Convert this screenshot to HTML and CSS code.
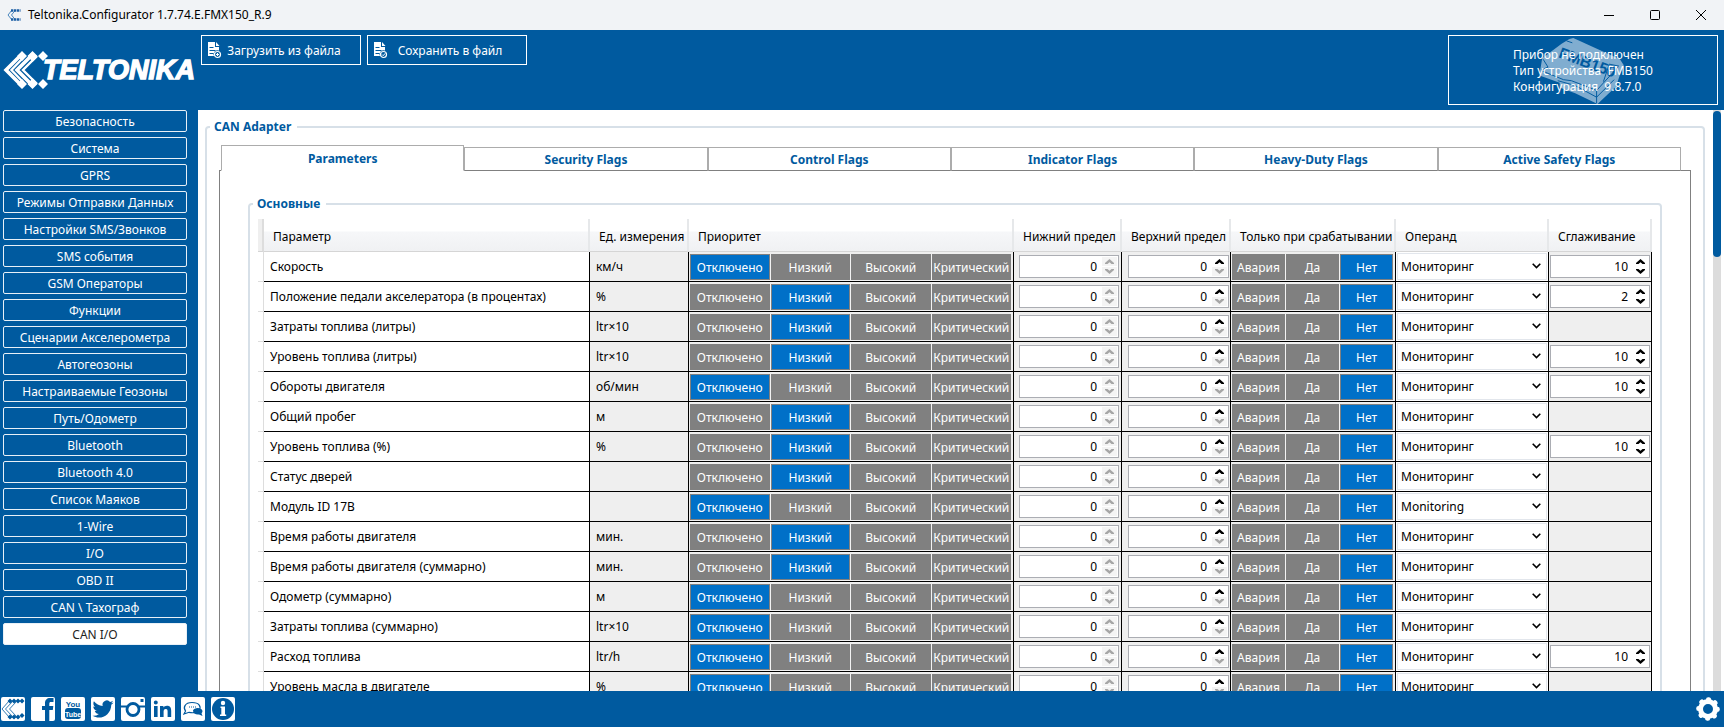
FILE: index.html
```html
<!DOCTYPE html>
<html lang="ru">
<head>
<meta charset="utf-8">
<title>Teltonika.Configurator 1.7.74.E.FMX150_R.9</title>
<link rel="stylesheet" href="styles.css">
</head>
<body>
<svg class="defs" aria-hidden="true">
  <defs>
    <symbol id="mark" viewBox="0 0 46 38">
      <path fill="currentColor" d="M19 0l5 5-5 5-5-5zM29.500 0l5 5-5 5-5-5zM40 0l5 5-5 5-5-5zM19 28l5 5-5 5-5-5zM29.500 28l5 5-5 5-5-5zM40 28l5 5-5 5-5-5z"/>
      <path fill="none" stroke="currentColor" stroke-width="3.600" d="M18 4L3 19l15 15M29 4L23.500 9.500 14 19l9.500 9.500L29 34"/>
      <path fill="none" stroke="currentColor" stroke-width="2.400" d="M20 7L8.500 19 20 31M34 5l-3 3-11 11 11 11 3 3"/>
      <path fill="currentColor" d="M25 5l4.500-4 5 5-5 5zM25 33l4.500 4 5-5-5-5z"/>
    </symbol>
    <symbol id="up" viewBox="0 0 9 5"><path fill="currentColor" d="M4.500 0L9 4v1H6.500L4.500 3.200 2.500 5H0V4z"/></symbol>
    <symbol id="down" viewBox="0 0 9 5"><path fill="currentColor" d="M4.500 5L9 1V0H6.500L4.500 1.800 2.500 0H0v1z"/></symbol>
    <symbol id="file" viewBox="0 0 15 17">
      <path fill="#fff" d="M1 0h7v5h4v3.500A4 4 0 0 0 7 14H1zM9 0l3.500 4H9z"/>
      <path stroke="#005a9f" d="M2.500 5.500h4M2.500 8.500h6M2.500 11.500h4"/>
      <circle cx="10.500" cy="12.500" r="3" fill="#005a9f" stroke="#fff" stroke-width="1.200"/>
    </symbol>
  </defs>
</svg>

<header class="titlebar">
  <svg class="titlebar__icon" viewBox="0 0 14 12"><g fill="none" stroke="#4a86bd"><path d="M5 1L1 6l4 5M8.500 1L4.500 6l4 5"/><path stroke="#1c5fa5" stroke-width="2.400" stroke-dasharray="2.400 .6" d="M4 1.500h9.500M4 10.500h9.500"/></g></svg>
  <h1 class="titlebar__title">Teltonika.Configurator 1.7.74.E.FMX150_R.9</h1>
  <div class="titlebar__controls">
    <button class="winbtn" aria-label="Свернуть"><svg viewBox="0 0 12 12"><path d="M1 6.500h10"/></svg></button>
    <button class="winbtn" aria-label="Развернуть"><svg viewBox="0 0 12 12"><rect x="1.500" y="1.500" width="9" height="9" rx="1"/></svg></button>
    <button class="winbtn" aria-label="Закрыть"><svg viewBox="0 0 12 12"><path d="M1 1l10 10M11 1L1 11"/></svg></button>
  </div>
</header>

<div class="topbar">
  <svg class="logo" viewBox="0 0 192 38" role="img" aria-label="Teltonika">
    <use href="#mark" width="46" height="38"/>
    <text class="logo__text" x="40" y="28">TELTONIKA</text>
  </svg>
  <div class="toolbar">
    <button class="toolbtn"><svg viewBox="0 0 15 17"><use href="#file"/><path stroke="#fff" d="M9 12.500h3M10.500 11v3"/></svg><span>Загрузить из файла</span></button>
    <button class="toolbtn"><svg viewBox="0 0 15 17"><use href="#file"/><path stroke="#fff" fill="none" d="M9 12.500l1.200 1.200 2-2.400"/></svg><span>Сохранить в файл</span></button>
  </div>
  <div class="device">
    <svg class="device__image" viewBox="0 0 88 70" aria-hidden="true">
      <path fill="#80add0" d="M30 3l4-1 48 22 4 6-4 10-4 12-19 18-23-11-16-6v-5L0 41v-6l2-12 20-15z"/>
      <path fill="none" stroke="#005a9f" d="M2 36l22 9 8 1 26 10 22-24M18 46l18 5 22 12 18-18M58 56v13M3 24l5 8-7 3M65 47l6-18 10 2M27 5l6 2"/>
      <text class="device__label" transform="translate(18 22) rotate(20)">FMB150</text>
    </svg>
    <p class="device__text">Прибор не подключен<br>Тип устройства &nbsp;FMB150<br>Конфигурация &nbsp;9.8.7.0</p>
  </div>
</div>

<div class="workspace">
  <nav class="sidebar" id="sidebar"></nav>
  <main class="content">
    <fieldset class="group">
      <legend class="group__title">CAN Adapter</legend>
      <div class="tabs" role="tablist">
        <button class="tab tab--active" role="tab" aria-selected="true">Parameters</button>
        <button class="tab" role="tab">Security Flags</button>
        <button class="tab" role="tab">Control Flags</button>
        <button class="tab" role="tab">Indicator Flags</button>
        <button class="tab" role="tab">Heavy-Duty Flags</button>
        <button class="tab" role="tab">Active Safety Flags</button>
      </div>
      <div class="panel" role="tabpanel">
        <fieldset class="group group--inner">
          <legend class="group__title">Основные</legend>
          <table class="grid">
            <colgroup>
              <col class="col-mark"><col><col class="col-unit"><col class="col-priority"><col class="col-low"><col class="col-high"><col class="col-event"><col class="col-operand"><col class="col-avg">
            </colgroup>
            <thead>
              <tr><th class="grid__corner"></th><th>Параметр</th><th>Ед. измерения</th><th>Приоритет</th><th>Нижний предел</th><th>Верхний предел</th><th>Только при срабатывании</th><th>Операнд</th><th>Сглаживание</th></tr>
            </thead>
            <tbody id="rows"></tbody>
          </table>
        </fieldset>
      </div>
    </fieldset>
  </main>
  <div class="scrollbar" aria-hidden="true"><div class="scrollbar__thumb"></div></div>
</div>

<footer class="footer">
  <a class="social social--mark" href="#" aria-label="Teltonika"><svg viewBox="0 0 24 24"><path fill="none" stroke="#005a9f" stroke-width=".8" d="M8 4L1 12l7 8M11 5l-6.500 7 6.500 7M15 5l-6.500 7 6.500 7"/><path fill="#005a9f" d="M9 1.500l2.500 2.500L9 6.500 6.500 4zM13 1.500l2.500 2.500L13 6.500 10.500 4zM17 1.500l2.500 2.500L17 6.500 14.500 4zM21 1.500l2.500 2.500L21 6.500 18.500 4zM9 17.500l2.500 2.500L9 22.500 6.500 20zM13 17.500l2.500 2.500-2.500 2.500-2.500-2.500zM17 17.500l2.500 2.500-2.500 2.500-2.500-2.500zM21 16l2.500 2.500L21 21l-2.500-2.500z"/></svg></a>
  <a class="social" href="#" aria-label="Facebook"><svg viewBox="0 0 24 24"><path fill="#005a9f" d="M14 24V13h-3V9h3V6c0-3 2-5 5-5h3.500v4H20c-1.300 0-1.700.6-1.700 1.800V9h4l-.5 4h-3.500v11z"/></svg></a>
  <a class="social" href="#" aria-label="YouTube"><svg viewBox="0 0 24 24"><text class="social__you" x="12" y="10" text-anchor="middle">You</text><rect x="4" y="11" width="16" height="11" rx="3" fill="#005a9f"/><text class="social__tube" x="12" y="20" text-anchor="middle">Tube</text></svg></a>
  <a class="social" href="#" aria-label="Twitter"><svg viewBox="0 0 24 24"><path fill="#005a9f" d="M22.500 5.500c-.8.400-1.600.6-2.500.7.900-.5 1.600-1.400 1.900-2.400-.8.500-1.800.9-2.800 1.100a4.300 4.300 0 0 0-7.400 4C8.100 8.700 5 7 2.900 4.300c-1.100 2-.5 4.500 1.400 5.800-.7 0-1.400-.2-2-.5 0 2.100 1.500 3.900 3.500 4.300-.6.200-1.300.2-2 .1.600 1.700 2.200 3 4.100 3A8.800 8.800 0 0 1 1.500 18.800C9.500 23.500 20 18.500 20.300 7.700c.9-.6 1.600-1.400 2.200-2.200z"/></svg></a>
  <a class="social" href="#" aria-label="Instagram"><svg viewBox="0 0 24 24"><path fill="none" stroke="#005a9f" stroke-width="2.200" d="M0 9.500h6M18 9.500h6"/><circle cx="12" cy="12.500" r="6" fill="none" stroke="#005a9f" stroke-width="2.800"/><path fill="#005a9f" d="M19.500 2h3v3h-3z"/></svg></a>
  <a class="social" href="#" aria-label="LinkedIn"><svg viewBox="0 0 24 24"><path fill="#005a9f" d="M3 9h3.600v11H3zM4.800 3.500a2 2 0 1 1 0 4 2 2 0 0 1 0-4zM9 9h3.400v1.500c.7-1.100 1.900-1.800 3.500-1.800 3.500 0 4.300 2.200 4.300 5.300v6h-3.600v-5.400c0-1.400-.1-2.700-1.800-2.700-1.700 0-2.200 1.200-2.200 2.700V20H9z"/></svg></a>
  <a class="social" href="#" aria-label="Форум"><svg viewBox="0 0 24 24"><path fill="#fff" stroke="#005a9f" stroke-width="1.200" d="M3 17l1.500-3C2 11 3.500 5.500 11 5.500s9.500 4.500 7 7.500-7 3-10 2.300z"/><path fill="#005a9f" d="M12 13.500c1-3.500 9-3.500 9.500.5 0 1-.4 1.700-1 2.300L21.500 19l-3.500-1.500c-3 .5-6-1-6-4z"/><path stroke="#005a9f" stroke-dasharray="1 1" d="M8 10h8"/></svg></a>
  <a class="social" href="#" aria-label="Информация"><svg viewBox="0 0 24 24"><circle cx="12" cy="12" r="11" fill="#005a9f"/><circle cx="12" cy="6" r="2.200" fill="#fff"/><path fill="#fff" d="M9.500 9.500H14v8h1.200v1.500H9v-1.500h1.300V11h-.8z"/></svg></a>
  <button class="settings" aria-label="Настройки"><svg viewBox="0 0 24 24"><circle cx="12" cy="12" r="7.500" fill="none" stroke="#fff" stroke-width="5"/><circle cx="12" cy="12" r="9.500" fill="none" stroke="#fff" stroke-width="4.600" stroke-linecap="round" stroke-dasharray=".6 6.861"/></svg></button>
</footer>
<script src="app.js"></script>
</body>
</html>
```
FILE: styles.css
```css
:root {
  --blue: #005a9f;
  --accent: #0070c8;
  --line: #d7e0e8;
  --cell: #efefef;
}

* { box-sizing: border-box; }

html, body { height: 100%; }

body {
  margin: 0;
  display: flex;
  flex-direction: column;
  overflow: hidden;
  background: #fff;
  color: #000;
  font: 12px/16px "Noto Sans", "Open Sans", sans-serif;
}

button, input, select { font: inherit; color: inherit; margin: 0; }

.defs { position: absolute; width: 0; height: 0; }

/* Window frame */
.titlebar {
  flex: none;
  display: flex;
  align-items: center;
  height: 30px;
  padding-left: 7px;
  background: #f1f3f6;
}
.titlebar__icon { width: 14px; height: 12px; }
.titlebar__title { flex: 1; margin: 0 0 0 7px; font-size: 12px; font-weight: 400; }
.titlebar__controls { display: flex; }
.winbtn {
  width: 46px;
  height: 30px;
  padding: 0;
  border: 0;
  background: none;
}
.winbtn svg { display: block; width: 12px; height: 12px; margin: auto; fill: none; stroke: #000; }

/* Top bar */
.topbar {
  flex: none;
  display: flex;
  align-items: flex-start;
  height: 80px;
  padding: 5px 6px 0 3px;
  background: var(--blue);
  color: #fff;
}
.logo { flex: none; width: 192px; height: 38px; margin: 16px 6px 0 0; color: #fff; }
.logo__text {
  fill: #fff;
  stroke: #fff;
  stroke-width: 1.4;
  font: italic bold 27px "Liberation Sans", Arial, sans-serif;
}
.toolbar { flex: 1; display: flex; gap: 6px; }
.toolbtn {
  display: flex;
  align-items: center;
  width: 160px;
  height: 30px;
  padding: 1px 14px 0 5px;
  border: 1px solid #fff;
  background: none;
}
.toolbtn svg { width: 15px; height: 17px; }
.toolbtn span { flex: 1; text-align: center; white-space: nowrap; }
.device {
  display: grid;
  place-items: center;
  width: 270px;
  height: 70px;
  border: 1px solid #fff;
}
.device > * { grid-area: 1 / 1; }
.device__image { width: 88px; height: 68px; }
.device__label { fill: var(--blue); font: bold 16px "Liberation Sans", Arial, sans-serif; }
.device__text { z-index: 1; margin: 0; padding-top: 2px; }

/* Sidebar */
.workspace { flex: 1; display: flex; min-height: 0; }
.sidebar {
  flex: none;
  display: flex;
  flex-direction: column;
  gap: 5px;
  width: 198px;
  padding: 0 11px 0 3px;
  background: var(--blue);
}
.sidebar__item {
  flex: none;
  height: 22px;
  padding: 1px 0 0;
  border: 1px solid #e8f0f7;
  border-radius: 2px;
  background: none;
  color: #fff;
}
.sidebar__item--active { background: #fff; color: #222; }

/* Content */
.content { flex: 1; min-width: 0; overflow: hidden; padding: 9px 8px 0 7px; }
.group {
  min-width: 0;
  margin: 0;
  padding: 10px 12px 12px;
  border: 2px solid var(--line);
  border-radius: 4px;
}
.group__title {
  margin-left: -9px;
  padding: 0 6px 0 4px;
  color: var(--blue);
  font-weight: 700;
}
.group--inner { padding: 7px 8px; }
.group--inner > .group__title { margin-left: -5px; }
.tabs { display: flex; align-items: flex-end; margin: 0 10px -1px 2px; }
.tab {
  position: relative;
  flex: 1;
  height: 24px;
  padding: 1px 0 0;
  border: 1px solid #acacac;
  border-bottom-color: #808080;
  background: #fff;
  color: var(--blue);
  font-weight: 700;
}
.tab--active { height: 26px; border-bottom-color: #fff; }
.panel { border: 1px solid #808080; padding: 25px 28px 24px; }

.grid { width: 100%; table-layout: fixed; border-collapse: separate; border-spacing: 0; }
.col-mark { width: 6px; }
.col-unit { width: 99px; }
.col-priority { width: 325px; }
.col-low { width: 108px; }
.col-high { width: 109px; }
.col-event { width: 165px; }
.col-operand { width: 153px; }
.col-avg { width: 103px; }
.grid th {
  height: 33px;
  padding: 3px 0 0 9px;
  border-right: 2px solid #e6e8ea;
  border-bottom: 1px solid #d5d5d5;
  background: linear-gradient(#fff 38%, #f6f7f9 40%, #f0f1f3);
  font-weight: 400;
  text-align: left;
  white-space: nowrap;
}
.grid .grid__corner { padding: 0; border-right-color: #ddd; background: #efefef; }
.grid td {
  height: 30px;
  padding: 0 2px 0 1px;
  border-right: 1px solid #000;
  border-bottom: 1px solid #000;
  background: var(--cell);
}
.grid .cell-mark { padding: 0; border-color: #ddd; background: #fff; }
.grid .cell-name { padding-left: 6px; background: #fff; }
.grid .cell-unit { padding-left: 6px; }
.grid .cell-low { padding: 0 2px 0 5px; }
.grid .cell-high { padding: 0 1px 0 6px; }
.grid .cell-operand { background: #fff; padding: 0 1px; }
.grid .cell-avg { padding: 0 1px; }

.segments { display: grid; grid-auto-flow: column; grid-auto-columns: 1fr; gap: 1px; background: #f2f2f2; }
.segment { position: relative; display: block; height: 26px; }
.segment input { position: absolute; inset: 0; opacity: 0; }
.segment span {
  display: block;
  height: 26px;
  border: 1px solid #808080;
  background: #808080;
  color: #fff;
  line-height: 26px;
  text-align: center;
}
.segment input:checked + span { background: var(--accent); }

.spin {
  display: flex;
  align-items: center;
  height: 23px;
  padding-right: 1px;
  border: 1px solid #abadb3;
  background: #fff;
}
.spin input {
  flex: 1;
  min-width: 0;
  padding: 0 5px 0 0;
  border: 0;
  outline: 0;
  background: none;
  text-align: right;
  appearance: textfield;
}
.spin input::-webkit-inner-spin-button { display: none; }
.spin__buttons { display: flex; flex-direction: column; gap: 1px; }
.spin__buttons button {
  display: grid;
  place-items: center;
  width: 15px;
  height: 9px;
  padding: 0;
  border: 0;
  background: none;
}
.spin__buttons button:disabled { background: #f4f4f4; color: #a6a6a6; }
.spin__buttons svg { width: 9px; height: 5px; }

.operand { position: relative; display: block; }
.operand select {
  display: block;
  width: 100%;
  height: 27px;
  padding: 0 20px 0 3px;
  border: 1px solid #e2e6ec;
  border-radius: 0;
  background: #fff;
  appearance: none;
}
.operand svg {
  position: absolute;
  right: 6px;
  top: 10px;
  width: 9px;
  height: 6px;
  fill: none;
  stroke: #000;
  stroke-width: 1.6;
  pointer-events: none;
}

.scrollbar { flex: none; width: 11px; padding: 1px 3px 1px 0; background: linear-gradient(90deg, #dcdcdc 8px, #fff 8px); }
.scrollbar__thumb { height: 146px; border-radius: 4px; background: var(--blue); }

/* Footer */
.footer {
  flex: none;
  display: flex;
  align-items: center;
  gap: 6px;
  height: 36px;
  padding: 0 4px 0 1px;
  background: var(--blue);
}
.social { width: 24px; height: 24px; border-radius: 2px; overflow: hidden; background: #fff; }
.social svg { display: block; width: 24px; height: 24px; }
.social__you { fill: var(--blue); font: bold 8px "Liberation Sans", sans-serif; }
.social__tube { fill: #fff; font: bold 7px "Liberation Sans", sans-serif; }
.settings { margin-left: auto; padding: 0; border: 0; background: none; }
.settings svg { display: block; width: 24px; height: 24px; }
```
FILE: app.js
```js
const sections = [
  'Безопасность', 'Система', 'GPRS', 'Режимы Отправки Данных', 'Настройки SMS/Звонков',
  'SMS события', 'GSM Операторы', 'Функции', 'Сценарии Акселерометра', 'Автогеозоны',
  'Настраиваемые Геозоны', 'Путь/Одометр', 'Bluetooth', 'Bluetooth 4.0', 'Список Маяков',
  '1-Wire', 'I/O', 'OBD II', 'CAN \\ Тахограф', 'CAN I/O'
];

// name, unit, priority index, averaging, operand
const params = [
  ['Скорость', 'км/ч', 0, 10],
  ['Положение педали акселератора (в процентах)', '%', 1, 2],
  ['Затраты топлива (литры)', 'ltr×10', 1],
  ['Уровень топлива (литры)', 'ltr×10', 1, 10],
  ['Обороты двигателя', 'об/мин', 0, 10],
  ['Общий пробег', 'м', 1],
  ['Уровень топлива (%)', '%', 1, 10],
  ['Статус дверей', '', 1],
  ['Модуль ID 17B', '', 0, null, 'Monitoring'],
  ['Время работы двигателя', 'мин.', 1],
  ['Время работы двигателя (суммарно)', 'мин.', 1],
  ['Одометр (суммарно)', 'м', 0],
  ['Затраты топлива (суммарно)', 'ltr×10', 0],
  ['Расход топлива', 'ltr/h', 0, 10],
  ['Уровень масла в двигателе', '%', 0]
];

const segments = (group, labels, selected) => `<div class="segments" role="radiogroup">${labels.map((label, i) =>
  `<label class="segment"><input type="radio" name="${group}"${i === selected ? ' checked' : ''}><span>${label}</span></label>`).join('')}</div>`;

const spin = (label, value, up, down) => `<div class="spin"><input type="number" value="${value}" aria-label="${label}">
  <div class="spin__buttons"><button aria-label="Больше"${up ? '' : ' disabled'}><svg><use href="#up"/></svg></button>
  <button aria-label="Меньше"${down ? '' : ' disabled'}><svg><use href="#down"/></svg></button></div></div>`;

document.getElementById('sidebar').innerHTML = sections.map((name, i) =>
  `<button class="sidebar__item${i === sections.length - 1 ? ' sidebar__item--active' : ''}">${name}</button>`).join('');

document.getElementById('rows').innerHTML = params.map(([name, unit, priority, avg, operand = 'Мониторинг'], i) => `<tr>
  <td class="cell-mark"></td>
  <td class="cell-name">${name}</td>
  <td class="cell-unit">${unit}</td>
  <td>${segments('priority' + i, ['Отключено', 'Низкий', 'Высокий', 'Критический'], priority)}</td>
  <td class="cell-low">${spin('Нижний предел', 0, false, false)}</td>
  <td class="cell-high">${spin('Верхний предел', 0, true, false)}</td>
  <td>${segments('event' + i, ['Авария', 'Да', 'Нет'], 2)}</td>
  <td class="cell-operand"><label class="operand"><select aria-label="Операнд"><option>${operand}</option></select><svg viewBox="0 0 9 6"><path d="M.7.700l3.800 3.800L8.300.700"/></svg></label></td>
  <td class="cell-avg">${avg ? spin('Сглаживание', avg, true, true) : ''}</td>
</tr>`).join('');
```
